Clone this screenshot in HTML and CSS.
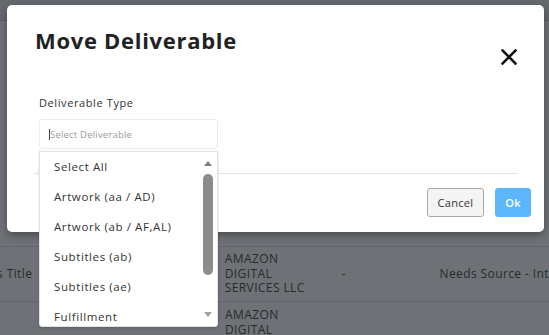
FILE: index.html
```html
<!doctype html>
<html>
	<head>
		<title>Move Deliverable</title>
		<link rel="stylesheet" href="styles.css">
	</head>
	<body>

		<!--	The grid behind the overlay.	-->
		<div class="backdrop">
			<div class="topStrip"></div>
			<div class="gridHead"></div>
			<div class="gridRow">
				<div class="cell cTitle">s Title</div>
				<div class="cell cNum"></div>
				<div class="cell cName"></div>
				<div class="cell cCompany">AMAZON<br>DIGITAL<br>SERVICES LLC</div>
				<div class="cell cDash">-</div>
				<div class="cell cStatus">Needs Source - Int</div>
			</div>
			<div class="gridRow">
				<div class="cell cTitle">s Title</div>
				<div class="cell cNum">11</div>
				<div class="cell cName">Ardia</div>
				<div class="cell cCompany">AMAZON<br>DIGITAL</div>
				<div class="cell cDash">-</div>
				<div class="cell cStatus">New</div>
			</div>
		</div>

		<!--	The modal dialog.	-->
		<div class="modal">
			<div class="modalHeader">
				<h2 class="modalTitle">Move Deliverable</h2>
				<svg class="closeIcon" width="16" height="16" viewBox="0 0 16 16">
					<path d="M1.5 1.5 L14.5 14.5 M14.5 1.5 L1.5 14.5" stroke="#111" stroke-width="2.6" stroke-linecap="square" fill="none"/>
				</svg>
			</div>
			<div class="modalBody">
				<label class="fieldLabel">Deliverable Type</label>
				<div class="selectBox">
					<span class="caret"></span>
					<span class="placeholder">Select Deliverable</span>
				</div>
			</div>
			<hr class="divider">
			<div class="modalFooter">
				<button class="btn btnCancel">Cancel</button>
				<button class="btn btnOk">Ok</button>
			</div>
		</div>

		<!--	The open list of deliverable types.	-->
		<div class="dropdown">
			<ul class="optionList">
				<li>Select All</li>
				<li>Artwork (aa / AD)</li>
				<li>Artwork (ab / AF,AL)</li>
				<li>Subtitles (ab)</li>
				<li>Subtitles (ae)</li>
				<li>Fulfillment</li>
			</ul>
			<div class="scrollBar">
				<span class="arrowUp"></span>
				<span class="thumb"></span>
				<span class="arrowDown"></span>
			</div>
		</div>

	</body>
</html>
```

FILE: styles.css
```css
html, body {
	margin: 0;
	padding: 0;
	width: 549px;
	height: 335px;
	overflow: hidden;
	font-family: "Open Sans", "Liberation Sans", sans-serif;
	background-color: #6e7276;
}

/* background grid */

.backdrop {
	width: 549px;
	height: 335px;
	overflow: hidden;
}

.topStrip {
	height: 20px;
	background-color: #66696d;
	border-bottom: 1px solid #5c5f63;
}

.gridHead {
	height: 225px;
}

.gridRow {
	display: flex;
	height: 54px;
	border-top: 1px solid #62656a;
	color: #272a2e;
	font-size: 12px;
	letter-spacing: 0.4px;
}

.cell {
	display: flex;
	align-items: center;
	line-height: 14.5px;
}

.cTitle {
	width: 80px;
	margin-left: -3px;
}

.cNum {
	width: 37px;
	padding-left: 12px;
	padding-top: 26px;
	box-sizing: border-box;
}

.cName {
	width: 111px;
	padding-top: 28px;
	box-sizing: border-box;
}

.cCompany {
	width: 117px;
}

.cDash {
	width: 98px;
}

.cStatus {
	flex: 1;
	white-space: nowrap;
}

.gridRow + .gridRow .cTitle,
.gridRow + .gridRow .cDash,
.gridRow + .gridRow .cStatus {
	padding-top: 28px;
}

.gridRow + .gridRow .cCompany {
	align-items: flex-start;
	padding-top: 6px;
}

/* modal */

.modal {
	position: absolute;
	left: 7px;
	top: 5px;
	width: 537px;
	height: 227px;
	background-color: #ffffff;
	border-radius: 5px;
	box-shadow: 0 3px 9px rgba(0, 0, 0, 0.35);
}

.modalHeader {
	display: flex;
	justify-content: space-between;
	align-items: flex-start;
	padding: 20px 27px 0 28px;
}

.modalTitle {
	margin: 0;
	font-size: 22px;
	font-weight: 700;
	color: #222222;
	letter-spacing: 0.7px;
}

.closeIcon {
	margin-top: 24px;
}

.modalBody {
	padding: 30px 0 0 32px;
}

.fieldLabel {
	display: block;
	font-size: 11px;
	color: #333333;
	letter-spacing: 0.6px;
}

.selectBox {
	display: flex;
	align-items: center;
	width: 179px;
	height: 30px;
	margin-top: 9px;
	box-sizing: border-box;
	border: 1px solid #ececec;
	border-radius: 3px;
	padding-left: 9px;
}

.caret {
	width: 1px;
	height: 11px;
	background-color: #444;
}

.placeholder {
	font-size: 9.5px;
	color: #9a9a9a;
	letter-spacing: 0.2px;
}

.divider {
	margin: 24px 26px 0 27px;
	border: 0;
	border-top: 1px solid #e3e3e3;
}

.modalFooter {
	display: flex;
	justify-content: flex-end;
	gap: 11px;
	padding: 14px 13px 0 0;
}

.btn {
	height: 29px;
	border-radius: 3px;
	font-family: "Open Sans", "Liberation Sans", sans-serif;
	font-size: 11px;
	letter-spacing: 0.3px;
	padding: 0;
}

.btnCancel {
	width: 57px;
	background-color: #f4f4f4;
	border: 1px solid #a9a9a9;
	color: #333333;
}

.btnOk {
	width: 36px;
	background-color: #5cb6fb;
	border: 1px solid #5cb6fb;
	color: #ffffff;
	font-weight: 600;
}

/* dropdown list */

.dropdown {
	position: absolute;
	left: 39px;
	top: 151px;
	width: 179px;
	height: 176px;
	box-sizing: border-box;
	display: flex;
	background-color: #ffffff;
	border: 1px solid #e2e2e2;
	border-radius: 0 0 3px 3px;
	box-shadow: 0 1px 3px rgba(0, 0, 0, 0.15);
	overflow: hidden;
}

.optionList {
	flex: 1;
	list-style: none;
	margin: 0;
	padding: 0;
}

.optionList li {
	height: 30px;
	line-height: 30px;
	padding-left: 14px;
	font-size: 11.5px;
	color: #333333;
	letter-spacing: 0.6px;
	white-space: nowrap;
}

.scrollBar {
	width: 14px;
	margin-right: 2px;
	display: flex;
	flex-direction: column;
	align-items: center;
}

.arrowUp {
	margin-top: 9px;
	width: 0;
	height: 0;
	border-left: 4.5px solid transparent;
	border-right: 4.5px solid transparent;
	border-bottom: 5px solid #7d7d7d;
}

.thumb {
	margin-top: 8px;
	width: 10px;
	height: 101px;
	border-radius: 5px;
	background-color: #8c8c8c;
}

.arrowDown {
	margin-top: 37px;
	width: 0;
	height: 0;
	border-left: 4.5px solid transparent;
	border-right: 4.5px solid transparent;
	border-top: 5px solid #a3a3a3;
}
```
